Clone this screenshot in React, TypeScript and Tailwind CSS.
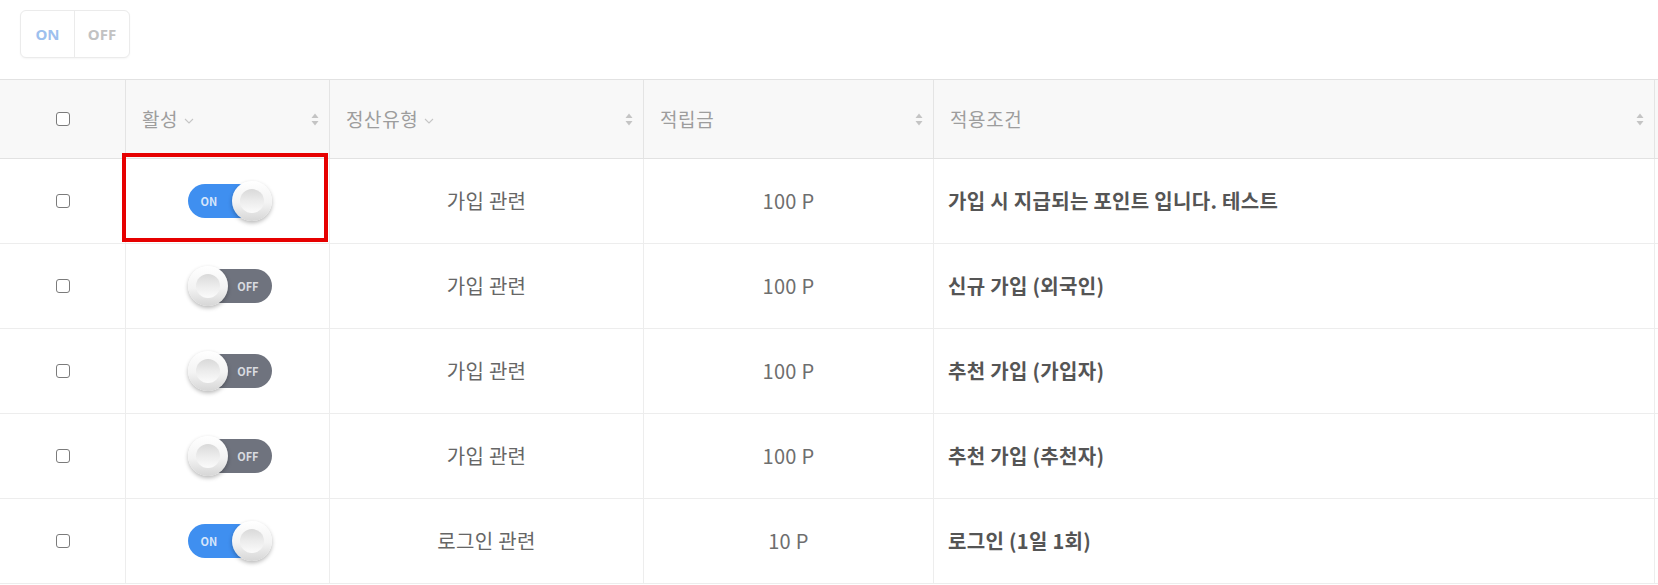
import React from "react";

const rows = [
  { on: true, type: "가입 관련", amount: "100 P", cond: "가입 시 지급되는 포인트 입니다. 테스트" },
  { on: false, type: "가입 관련", amount: "100 P", cond: "신규 가입 (외국인)" },
  { on: false, type: "가입 관련", amount: "100 P", cond: "추천 가입 (가입자)" },
  { on: false, type: "가입 관련", amount: "100 P", cond: "추천 가입 (추천자)" },
  { on: true, type: "로그인 관련", amount: "10 P", cond: "로그인 (1일 1회)" },
];

function SortIcon() {
  return (
    <svg width="8" height="13" viewBox="0 0 8 13" className="shrink-0">
      <path d="M4 0.5 L7.5 5 L0.5 5 Z" fill="#c4c4c4" />
      <path d="M4 12.5 L7.5 8 L0.5 8 Z" fill="#c4c4c4" />
    </svg>
  );
}

function Chevron() {
  return (
    <svg width="10" height="6" viewBox="0 0 10 6" className="ml-[6px] mt-[4px]">
      <path d="M1 1 L5 5 L9 1" fill="none" stroke="#c6c6c6" strokeWidth="1.1" />
    </svg>
  );
}

function Checkbox() {
  return <div className="w-[14px] h-[14px] border border-[#7b7b7b] rounded-[3px] bg-white" />;
}

function Thumb() {
  return (
    <div className="w-[40px] h-[40px] rounded-full bg-[linear-gradient(180deg,#ffffff_0%,#f3f3f3_55%,#d6d6d6_100%)] shadow-[0_2px_4px_rgba(0,0,0,0.28)] flex items-center justify-center">
      <div className="w-[24px] h-[24px] rounded-full bg-[linear-gradient(180deg,#d9d9d9_0%,#ececec_50%,#fbfbfb_100%)]" />
    </div>
  );
}

function Switch({ on }: { on: boolean }) {
  return (
    <div className="relative w-[84px] h-[40px]">
      <div
        className={
          on
            ? "absolute top-[3px] bottom-[3px] left-0 right-[8px] rounded-full bg-[#3f8ff0] flex items-center pl-[13px]"
            : "absolute top-[3px] bottom-[3px] left-[8px] right-0 rounded-full bg-[#6f737e] flex items-center justify-end pr-[13px]"
        }
      >
        <span
          className={
            on
              ? "text-[11px] font-bold text-[#d7e6fb] leading-none"
              : "text-[11px] font-bold text-[#d9dbe0] leading-none"
          }
        >
          {on ? "ON" : "OFF"}
        </span>
      </div>
      <div className={on ? "absolute top-0 right-0" : "absolute top-0 left-0"}>
        <Thumb />
      </div>
    </div>
  );
}

function HeaderCell({ label, chevron }: { label: string; chevron?: boolean }) {
  return (
    <div className="h-full flex items-center justify-between pl-[16px] pr-[10px] border-r border-[#e4e4e4]">
      <div className="flex items-center">
        <span className="text-[19px] tracking-[0.6px] text-[#9d9d9d]">{label}</span>
        {chevron && <Chevron />}
      </div>
      <SortIcon />
    </div>
  );
}

export default function App() {
  return (
    <div className="relative w-[1658px] h-[585px] bg-white overflow-hidden [font-family:'Noto_Sans_CJK_KR','Noto_Sans',sans-serif]">
      <div className="pt-[10px] pl-[20px] h-[79px]">
        <div className="inline-flex h-[48px] border border-[#ebebeb] rounded-[6px] shadow-[0_1px_2px_rgba(0,0,0,0.04)] bg-white">
          <div className="w-[54px] flex items-center justify-center border-r border-[#ebebeb] text-[15px] font-bold text-[#9dc0ee] [font-family:'Noto_Sans',sans-serif]">
            ON
          </div>
          <div className="w-[54px] flex items-center justify-center text-[15px] font-bold text-[#c2c2c2] [font-family:'Noto_Sans',sans-serif]">
            OFF
          </div>
        </div>
      </div>

      <div className="grid grid-cols-[126px_204px_314px_290px_721px_1fr]">
        {[0, 1, 2, 3, 4, 5].map((i) => (
          <div key={i} className="h-[80px] bg-[#f8f8f8] border-t border-b border-[#e2e2e2]">
            {i === 0 && (
              <div className="h-full flex items-center justify-center border-r border-[#e4e4e4]">
                <Checkbox />
              </div>
            )}
            {i === 1 && <HeaderCell label="활성" chevron />}
            {i === 2 && <HeaderCell label="정산유형" chevron />}
            {i === 3 && <HeaderCell label="적립금" />}
            {i === 4 && <HeaderCell label="적용조건" />}
          </div>
        ))}

        {rows.map((r, idx) => (
          <div key={idx} className="contents">
            <div className="h-[85px] border-b border-r border-[#ededed] flex items-center justify-center">
              <Checkbox />
            </div>
            <div className="h-[85px] border-b border-r border-[#ededed] flex items-center justify-center pl-[4px]">
              <Switch on={r.on} />
            </div>
            <div className="h-[85px] border-b border-r border-[#ededed] flex items-center justify-center text-[20px] tracking-[0.3px] text-[#666666]">
              {r.type}
            </div>
            <div className="h-[85px] border-b border-r border-[#ededed] flex items-center justify-center text-[20px] tracking-[0.3px] text-[#6e6e6e]">
              {r.amount}
            </div>
            <div className="h-[85px] border-b border-r border-[#ededed] flex items-center pl-[14px] text-[20px] tracking-[0.3px] font-bold text-[#555555]">
              {r.cond}
            </div>
            <div className="h-[85px] border-b border-[#ededed]" />
          </div>
        ))}
      </div>

      <div className="absolute left-[122px] top-[153px] w-[206px] h-[89px] border-[4px] border-[#e60000] pointer-events-none" />
    </div>
  );
}
